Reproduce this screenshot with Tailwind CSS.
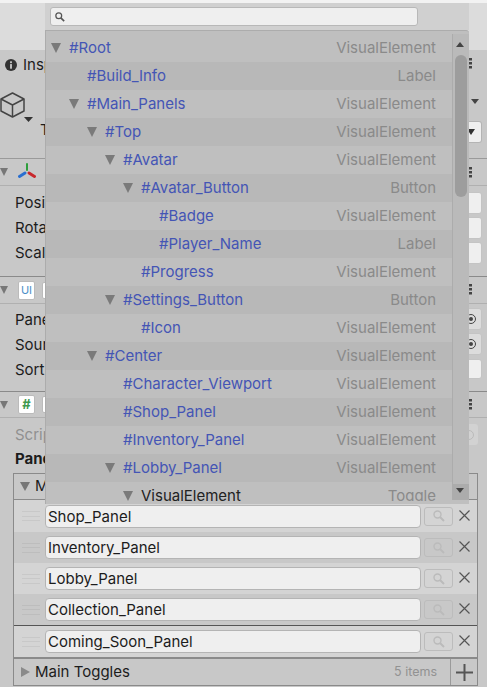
<!DOCTYPE html>
<html lang="en">
<head>
  <meta charset="UTF-8">
  <title>Inspector</title>
  <script src="https://cdn.jsdelivr.net/npm/@tailwindcss/browser@4"></script>
</head>
<body class="w-[487px] h-[687px] overflow-hidden bg-[#c8c8c8] text-[#1c1c1c] font-['Inter',sans-serif] text-[15px] relative">
  <!-- Inspector underneath -->
  <div class="h-[3px] bg-[#f2f2f2]"></div>
  <div class="h-[47px] bg-[#dcdcdc]"></div>
  <div class="h-[29px] pl-[5px] pt-[1px] flex items-center gap-[6px] bg-[#c8c8c8]">
    <svg width="12" height="12" viewBox="0 0 13 13"><circle cx="6.500" cy="6.500" r="6.500" fill="#333"/><rect x="5.500" y="5.500" width="2" height="5" fill="#c8c8c8"/><rect x="5.500" y="2.500" width="2" height="2" fill="#c8c8c8"/></svg>
    <span>Inspector</span>
  </div>
  <div class="h-[80px] border-b border-[#9a9a9a] pt-[13px]">
    <svg width="34" height="32" viewBox="0 0 34 32" fill="none" stroke="#444" stroke-width="1.500" stroke-linejoin="round"><path d="M12.500 1 24 7V19L12.500 25 1 19V7Z"/><path d="M1 7 12.500 13 24 7M12.500 13V25"/><path d="M24 25h9l-4.500 5z" fill="#333" stroke="none"/></svg>
  </div>
  <div class="h-[27px] flex items-center gap-[10px] border-b border-[#b0b0b0]">
    <div class="w-0 h-0 border-x-[4px] border-x-transparent border-t-[8px] border-t-[#777]"></div>
    <svg width="18" height="18" viewBox="0 0 18 18"><rect x="8" y="0" width="2" height="8" rx="1" fill="#2e9e3c"/><path d="M7 10 1.500 13.500" stroke="#2a6fd0" stroke-width="3" stroke-linecap="round"/><path d="M11 10 16.500 13.500" stroke="#c8282c" stroke-width="3" stroke-linecap="round"/></svg>
  </div>
  <div class="h-[91px] pl-[15px] pt-[4px] flex flex-col border-b border-[#8a8a8a]">
    <div class="h-[25px] leading-[25px]">Position</div>
    <div class="h-[25px] leading-[25px]">Rotation</div>
    <div class="h-[25px] leading-[25px]">Scale</div>
  </div>
  <div class="h-[27px] flex items-center gap-[10px] border-b border-[#b0b0b0]">
    <div class="w-0 h-0 border-x-[4px] border-x-transparent border-t-[8px] border-t-[#777]"></div>
    <div class="w-[17px] h-[19px] bg-white border border-[#bbb] rounded-[2px] text-[11px] leading-[17px] text-center text-[#4a8fc8]">UI</div>
    <div class="-ml-[3px] w-[6px] h-[17px] bg-white border border-[#bbb] rounded-[2px]"></div>
  </div>
  <div class="h-[88px] pl-[15px] pt-[3px] flex flex-col border-b border-[#8a8a8a]">
    <div class="h-[25px] leading-[25px]">Panel</div>
    <div class="h-[25px] leading-[25px]">Source</div>
    <div class="h-[25px] leading-[25px]">Sort</div>
  </div>
  <div class="h-[26px] flex items-center gap-[10px] border-b border-[#b0b0b0]">
    <div class="w-0 h-0 border-x-[4px] border-x-transparent border-t-[8px] border-t-[#777]"></div>
    <div class="w-[17px] h-[19px] bg-white border border-[#bbb] rounded-[2px] text-[13px] leading-[17px] font-bold text-center text-[#3f9a50]">#</div>
    <div class="-ml-[3px] w-[6px] h-[17px] bg-white border border-[#bbb] rounded-[2px]"></div>
  </div>
  <div class="pl-[15px] h-[29px] pt-[5px] leading-[24px] text-[#909090]">Script</div>
  <div class="pl-[15px] h-[26px] leading-[24px] font-bold">Panels</div>

  <div class="ml-[13px] w-[465px] border-t border-x border-[#8a8a8a]">
    <div class="h-[26px] flex items-center pl-[6px] gap-[5px] border-b border-[#8a8a8a] bg-[#c8c8c8]">
      <div class="w-0 h-0 border-x-[5px] border-x-transparent border-t-[9px] border-t-[#777]"></div>
      <span>Main Panels</span>
    </div>
    <div class="h-[32px] pl-[8px] flex items-center bg-[#d4d4d4]">
      <div class="w-[18px] h-[10px] mr-[5px] flex flex-col justify-between"><div class="h-px bg-[#c8c8c8]"></div><div class="h-px bg-[#c8c8c8]"></div><div class="h-px bg-[#c8c8c8]"></div></div>
      <div class="w-[376px] h-[23px] pl-[2px] leading-[21px] bg-[#efefef] border border-[#b4b4b4] rounded-[4px]">Shop_Panel</div>
      <div class="ml-[3px] w-[29px] h-[19px] flex items-center justify-center border border-[#bcbcbc] rounded-[3px]">
        <svg width="12" height="12" viewBox="0 0 12 12" fill="none" stroke="#bbb" stroke-width="1.400"><circle cx="4.500" cy="4.500" r="3.500"/><path d="M7 7l4 4" stroke-width="2"/></svg>
      </div>
      <svg class="ml-[6px] -mt-[2px]" width="11" height="11" viewBox="0 0 11 11" stroke="#555" stroke-width="1.200"><path d="M.5.500l10 10M10.500.500l-10 10"/></svg>
    </div>
    <div class="h-[31px] pl-[8px] flex items-center bg-[#c8c8c8]">
      <div class="w-[18px] h-[10px] mr-[5px] flex flex-col justify-between"><div class="h-px bg-[#bdbdbd]"></div><div class="h-px bg-[#bdbdbd]"></div><div class="h-px bg-[#bdbdbd]"></div></div>
      <div class="w-[376px] h-[23px] pl-[2px] leading-[21px] bg-[#efefef] border border-[#b4b4b4] rounded-[4px]">Inventory_Panel</div>
      <div class="ml-[3px] w-[29px] h-[19px] flex items-center justify-center border border-[#bcbcbc] rounded-[3px]">
        <svg width="12" height="12" viewBox="0 0 12 12" fill="none" stroke="#bbb" stroke-width="1.400"><circle cx="4.500" cy="4.500" r="3.500"/><path d="M7 7l4 4" stroke-width="2"/></svg>
      </div>
      <svg class="ml-[6px] -mt-[2px]" width="11" height="11" viewBox="0 0 11 11" stroke="#555" stroke-width="1.200"><path d="M.5.500l10 10M10.500.500l-10 10"/></svg>
    </div>
    <div class="h-[31px] pl-[8px] flex items-center bg-[#d4d4d4]">
      <div class="w-[18px] h-[10px] mr-[5px] flex flex-col justify-between"><div class="h-px bg-[#c8c8c8]"></div><div class="h-px bg-[#c8c8c8]"></div><div class="h-px bg-[#c8c8c8]"></div></div>
      <div class="w-[376px] h-[23px] pl-[2px] leading-[21px] bg-[#efefef] border border-[#b4b4b4] rounded-[4px]">Lobby_Panel</div>
      <div class="ml-[3px] w-[29px] h-[19px] flex items-center justify-center border border-[#bcbcbc] rounded-[3px]">
        <svg width="12" height="12" viewBox="0 0 12 12" fill="none" stroke="#bbb" stroke-width="1.400"><circle cx="4.500" cy="4.500" r="3.500"/><path d="M7 7l4 4" stroke-width="2"/></svg>
      </div>
      <svg class="ml-[6px] -mt-[2px]" width="11" height="11" viewBox="0 0 11 11" stroke="#555" stroke-width="1.200"><path d="M.5.500l10 10M10.500.500l-10 10"/></svg>
    </div>
    <div class="h-[32px] pl-[8px] flex items-center bg-[#c8c8c8] border-b border-[#555]">
      <div class="w-[18px] h-[10px] mr-[5px] flex flex-col justify-between"><div class="h-px bg-[#bdbdbd]"></div><div class="h-px bg-[#bdbdbd]"></div><div class="h-px bg-[#bdbdbd]"></div></div>
      <div class="w-[376px] h-[23px] pl-[2px] leading-[21px] bg-[#efefef] border border-[#b4b4b4] rounded-[4px]">Collection_Panel</div>
      <div class="ml-[3px] w-[29px] h-[19px] flex items-center justify-center border border-[#bcbcbc] rounded-[3px]">
        <svg width="12" height="12" viewBox="0 0 12 12" fill="none" stroke="#bbb" stroke-width="1.400"><circle cx="4.500" cy="4.500" r="3.500"/><path d="M7 7l4 4" stroke-width="2"/></svg>
      </div>
      <svg class="ml-[6px] -mt-[2px]" width="11" height="11" viewBox="0 0 11 11" stroke="#555" stroke-width="1.200"><path d="M.5.500l10 10M10.500.500l-10 10"/></svg>
    </div>
    <div class="h-[32px] pl-[8px] flex items-center bg-[#d4d4d4] border-b border-[#8a8a8a]">
      <div class="w-[18px] h-[10px] mr-[5px] flex flex-col justify-between"><div class="h-px bg-[#c8c8c8]"></div><div class="h-px bg-[#c8c8c8]"></div><div class="h-px bg-[#c8c8c8]"></div></div>
      <div class="w-[376px] h-[23px] pl-[2px] leading-[21px] bg-[#efefef] border border-[#b4b4b4] rounded-[4px]">Coming_Soon_Panel</div>
      <div class="ml-[3px] w-[29px] h-[19px] flex items-center justify-center border border-[#bcbcbc] rounded-[3px]">
        <svg width="12" height="12" viewBox="0 0 12 12" fill="none" stroke="#bbb" stroke-width="1.400"><circle cx="4.500" cy="4.500" r="3.500"/><path d="M7 7l4 4" stroke-width="2"/></svg>
      </div>
      <svg class="ml-[6px] -mt-[2px]" width="11" height="11" viewBox="0 0 11 11" stroke="#555" stroke-width="1.200"><path d="M.5.500l10 10M10.500.500l-10 10"/></svg>
    </div>
  </div>
  <div class="ml-[13px] w-[465px] h-[28px] flex items-center pl-[7px] gap-[5px] border border-[#8a8a8a]">
    <div class="w-0 h-0 border-y-[5px] border-y-transparent border-l-[9px] border-l-[#8a8a8a]"></div>
    <span>Main Toggles</span>
    <span class="ml-auto mr-[8px] text-[12.500px] text-[#929292]">5 items</span>
    <div class="w-[27px] h-full border-l border-[#9a9a9a] flex items-center justify-center">
      <svg width="17" height="17" viewBox="0 0 17 17" stroke="#555" stroke-width="2"><path d="M8.500 0v17M0 8.500h17"/></svg>
    </div>
  </div>

  <!-- right edge bits that stick out past the popup -->
  <svg class="absolute left-[469px] top-[58px]" width="3" height="11" viewBox="0 0 3 11" fill="#444"><rect width="3" height="2.500"/><rect y="4" width="3" height="2.500"/><rect y="8" width="3" height="2.500"/></svg>
  <svg class="absolute left-[469px] top-[167px]" width="3" height="11" viewBox="0 0 3 11" fill="#444"><rect width="3" height="2.500"/><rect y="4" width="3" height="2.500"/><rect y="8" width="3" height="2.500"/></svg>
  <svg class="absolute left-[469px] top-[284px]" width="3" height="11" viewBox="0 0 3 11" fill="#444"><rect width="3" height="2.500"/><rect y="4" width="3" height="2.500"/><rect y="8" width="3" height="2.500"/></svg>
  <svg class="absolute left-[469px] top-[399px]" width="3" height="11" viewBox="0 0 3 11" fill="#444"><rect width="3" height="2.500"/><rect y="4" width="3" height="2.500"/><rect y="8" width="3" height="2.500"/></svg>
  <div class="absolute left-[469px] top-[121px] w-[13px] h-[22px] bg-[#efefef] border border-[#b4b4b4] border-l-0 rounded-r-[3px] flex items-center"><div class="w-0 h-0 border-x-[4px] border-x-transparent border-t-[6px] border-t-[#333] -ml-[2px]"></div></div>
  <div class="absolute left-[471px] top-[99px] w-0 h-0 border-x-[4px] border-x-transparent border-t-[5px] border-t-[#444]"></div>
  <div class="absolute left-[469px] top-[192px] w-[13px] h-[22px] bg-[#efefef] border border-[#c4c4c4] border-l-0 rounded-r-[3px]"></div>
  <div class="absolute left-[469px] top-[217px] w-[13px] h-[22px] bg-[#efefef] border border-[#c4c4c4] border-l-0 rounded-r-[3px]"></div>
  <div class="absolute left-[469px] top-[242px] w-[13px] h-[22px] bg-[#efefef] border border-[#c4c4c4] border-l-0 rounded-r-[3px]"></div>
  <div class="absolute left-[459px] top-[308px] w-[23px] h-[22px] bg-[#dcdcdc] border border-[#c4c4c4] rounded-r-[3px] flex items-center justify-center"><div class="w-[10px] h-[10px] rounded-full border border-[#444] flex items-center justify-center"><div class="w-[4px] h-[4px] rounded-full bg-[#444]"></div></div></div>
  <div class="absolute left-[459px] top-[333px] w-[23px] h-[22px] bg-[#dcdcdc] border border-[#c4c4c4] rounded-r-[3px] flex items-center justify-center"><div class="w-[10px] h-[10px] rounded-full border border-[#444] flex items-center justify-center"><div class="w-[4px] h-[4px] rounded-full bg-[#444]"></div></div></div>
  <div class="absolute left-[469px] top-[359px] w-[13px] h-[20px] bg-[#efefef] border border-[#c4c4c4] border-l-0 rounded-r-[3px]"></div>
  <div class="absolute left-[459px] top-[424px] w-[19px] h-[21px] bg-[#d2d2d2] rounded-r-[3px] flex items-center justify-center"><div class="w-[10px] h-[10px] rounded-full border border-[#bbb]"></div></div>
  <span class="absolute left-[40px] top-[120px] leading-[20px]">T</span>

  <!-- search popup -->
  <div class="absolute left-[45px] top-[3px] w-[424px] h-[27px] bg-[#d0d0d0] pl-[5px] pt-[4px]">
    <div class="w-[368px] h-[19px] bg-[#efefef] border border-[#b8b8b8] rounded-[3px] pl-[4px] flex items-center">
      <svg width="10" height="10" viewBox="0 0 12 12" fill="none" stroke="#555" stroke-width="1.500"><circle cx="4.500" cy="4.500" r="3.500"/><path d="M7 7l4 4" stroke-width="2"/></svg>
    </div>
  </div>
  <div class="absolute left-[45px] top-[30px] w-[424px] h-[474px] bg-[#bfbfbf] border-t border-l border-[#acacac] rounded-tr-[3px] overflow-hidden flex items-start pt-[3px]">
    <div class="w-[406px] h-[467px] overflow-hidden">
      <div class="h-[28px] flex items-center pr-[16px] pl-[5px] bg-[#bfbfbf]"><i class="w-[18px]"><div class="w-0 h-0 border-x-[5.500px] border-x-transparent border-t-[10px] border-t-[#7a7a7a]"></div></i><span class="text-[#4455b5]">#Root</span><span class="ml-auto text-[#8a8a8a]">VisualElement</span></div>
      <div class="h-[28px] flex items-center pr-[16px] pl-[41px] bg-[#b8b8b8]"><span class="text-[#4455b5]">#Build_Info</span><span class="ml-auto text-[#8a8a8a]">Label</span></div>
      <div class="h-[28px] flex items-center pr-[16px] pl-[23px] bg-[#bfbfbf]"><i class="w-[18px]"><div class="w-0 h-0 border-x-[5.500px] border-x-transparent border-t-[10px] border-t-[#7a7a7a]"></div></i><span class="text-[#4455b5]">#Main_Panels</span><span class="ml-auto text-[#8a8a8a]">VisualElement</span></div>
      <div class="h-[28px] flex items-center pr-[16px] pl-[41px] bg-[#b8b8b8]"><i class="w-[18px]"><div class="w-0 h-0 border-x-[5.500px] border-x-transparent border-t-[10px] border-t-[#7a7a7a]"></div></i><span class="text-[#4455b5]">#Top</span><span class="ml-auto text-[#8a8a8a]">VisualElement</span></div>
      <div class="h-[28px] flex items-center pr-[16px] pl-[59px] bg-[#bfbfbf]"><i class="w-[18px]"><div class="w-0 h-0 border-x-[5.500px] border-x-transparent border-t-[10px] border-t-[#7a7a7a]"></div></i><span class="text-[#4455b5]">#Avatar</span><span class="ml-auto text-[#8a8a8a]">VisualElement</span></div>
      <div class="h-[28px] flex items-center pr-[16px] pl-[77px] bg-[#b8b8b8]"><i class="w-[18px]"><div class="w-0 h-0 border-x-[5.500px] border-x-transparent border-t-[10px] border-t-[#7a7a7a]"></div></i><span class="text-[#4455b5]">#Avatar_Button</span><span class="ml-auto text-[#8a8a8a]">Button</span></div>
      <div class="h-[28px] flex items-center pr-[16px] pl-[113px] bg-[#bfbfbf]"><span class="text-[#4455b5]">#Badge</span><span class="ml-auto text-[#8a8a8a]">VisualElement</span></div>
      <div class="h-[28px] flex items-center pr-[16px] pl-[113px] bg-[#b8b8b8]"><span class="text-[#4455b5]">#Player_Name</span><span class="ml-auto text-[#8a8a8a]">Label</span></div>
      <div class="h-[28px] flex items-center pr-[16px] pl-[95px] bg-[#bfbfbf]"><span class="text-[#4455b5]">#Progress</span><span class="ml-auto text-[#8a8a8a]">VisualElement</span></div>
      <div class="h-[28px] flex items-center pr-[16px] pl-[59px] bg-[#b8b8b8]"><i class="w-[18px]"><div class="w-0 h-0 border-x-[5.500px] border-x-transparent border-t-[10px] border-t-[#7a7a7a]"></div></i><span class="text-[#4455b5]">#Settings_Button</span><span class="ml-auto text-[#8a8a8a]">Button</span></div>
      <div class="h-[28px] flex items-center pr-[16px] pl-[95px] bg-[#bfbfbf]"><span class="text-[#4455b5]">#Icon</span><span class="ml-auto text-[#8a8a8a]">VisualElement</span></div>
      <div class="h-[28px] flex items-center pr-[16px] pl-[41px] bg-[#b8b8b8]"><i class="w-[18px]"><div class="w-0 h-0 border-x-[5.500px] border-x-transparent border-t-[10px] border-t-[#7a7a7a]"></div></i><span class="text-[#4455b5]">#Center</span><span class="ml-auto text-[#8a8a8a]">VisualElement</span></div>
      <div class="h-[28px] flex items-center pr-[16px] pl-[77px] bg-[#bfbfbf]"><span class="text-[#4455b5]">#Character_Viewport</span><span class="ml-auto text-[#8a8a8a]">VisualElement</span></div>
      <div class="h-[28px] flex items-center pr-[16px] pl-[77px] bg-[#b8b8b8]"><span class="text-[#4455b5]">#Shop_Panel</span><span class="ml-auto text-[#8a8a8a]">VisualElement</span></div>
      <div class="h-[28px] flex items-center pr-[16px] pl-[77px] bg-[#bfbfbf]"><span class="text-[#4455b5]">#Inventory_Panel</span><span class="ml-auto text-[#8a8a8a]">VisualElement</span></div>
      <div class="h-[28px] flex items-center pr-[16px] pl-[59px] bg-[#b8b8b8]"><i class="w-[18px]"><div class="w-0 h-0 border-x-[5.500px] border-x-transparent border-t-[10px] border-t-[#7a7a7a]"></div></i><span class="text-[#4455b5]">#Lobby_Panel</span><span class="ml-auto text-[#8a8a8a]">VisualElement</span></div>
      <div class="h-[28px] flex items-center pr-[16px] pl-[77px] bg-[#bfbfbf]"><i class="w-[18px]"><div class="w-0 h-0 border-x-[5.500px] border-x-transparent border-t-[10px] border-t-[#7a7a7a]"></div></i><span class="text-[#222]">VisualElement</span><span class="ml-auto text-[#8a8a8a]">Toggle</span></div>
    </div>
    <!-- scrollbar -->
    <div class="w-[17px] h-[466px] bg-[#bababa] border-l border-[#acacac] relative">
      <div class="absolute left-[3px] top-[8px] w-0 h-0 border-x-[4.500px] border-x-transparent border-b-[5px] border-b-[#444]"></div>
      <div class="absolute left-[2px] top-[21px] w-[12px] h-[142px] rounded-full bg-[#9d9d9d]"></div>
      <div class="absolute left-0 bottom-0 w-full h-[16px] bg-[#acacac]"></div>
      <div class="absolute left-[3px] bottom-[7px] w-0 h-0 border-x-[4.500px] border-x-transparent border-t-[5px] border-t-[#444]"></div>
    </div>
  </div>
</body>
</html>
